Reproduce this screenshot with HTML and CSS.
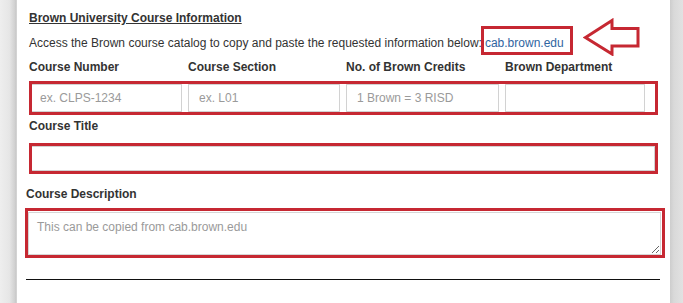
FILE: index.html
```html
<!DOCTYPE html>
<html lang="en">
<head>
<meta charset="utf-8">
<title>Brown University Course Information</title>
<link rel="stylesheet" href="styles.css">
</head>
<body>
<div class="page">
  <div class="gutter-left"></div>
  <main class="panel">
    <section class="info">
      <h3 class="heading">Brown University Course Information</h3>
      <p class="intro">Access the Brown course catalog to copy and paste the requested information below:<a class="link" href="#">cab.brown.edu</a><svg class="arrow" width="58" height="38" viewBox="0 0 58 38"><polygon points="2.5,19.5 29,2.5 29,10.5 55,10.5 55,28 29,28 29,36 " fill="#fff" stroke="#c62832" stroke-width="3" stroke-linejoin="miter"/></svg></p>
      <div class="grid labels">
        <label>Course Number</label>
        <label>Course Section</label>
        <label>No. of Brown Credits</label>
        <label>Brown Department</label>
      </div>
      <div class="grid fields hl">
        <input class="field" type="text" placeholder="ex. CLPS-1234">
        <input class="field" type="text" placeholder="ex. L01">
        <input class="field" type="text" placeholder="1 Brown = 3 RISD">
        <input class="field last" type="text">
      </div>
      <label class="label-block">Course Title</label>
      <div class="title-row hl">
        <input class="field wide" type="text">
      </div>
    </section>
    <section class="desc">
      <label class="label-block">Course Description</label>
      <div class="desc-row hl">
        <textarea class="area" placeholder="This can be copied from cab.brown.edu"></textarea>
      </div>
      <hr class="rule">
    </section>
  </main>
  <div class="gutter-right"></div>
</div>
</body>
</html>
```
FILE: styles.css
```css
* { box-sizing: border-box; }
html, body { margin: 0; padding: 0; }
body {
  font-family: "Liberation Sans", Arial, sans-serif;
  font-size: 12px;
  color: #333;
  background: #fff;
}
.page {
  display: flex;
  height: 303px;
  overflow: hidden;
}
.gutter-left {
  width: 17px;
  flex: none;
  background: linear-gradient(to right, #eeeeee 0, #e6e6e6 55%, #d2d2d2 85%, #c8c8c8 94%, #dedede 100%);
}
.gutter-right {
  width: 13px;
  flex: none;
  background: linear-gradient(to right, #cdcdcd 0, #d9d9d9 30%, #e2e2e2 100%);
}
.panel {
  flex: 1;
  background: #fff;
}
.info {
  padding: 0 12px;
}
.heading {
  margin: 11px 0 0;
  font-size: 12px;
  line-height: 14px;
  font-weight: bold;
  text-decoration: underline;
  color: #333;
}
.intro {
  position: relative;
  margin: 11px 0 0;
  line-height: 14px;
  white-space: nowrap;
}
.link {
  position: relative;
  display: inline-block;
  margin-left: 3px;
  color: #30659f;
  text-decoration: none;
}
.link::after {
  content: "";
  position: absolute;
  left: -4px;
  right: -9px;
  top: -10px;
  bottom: -5px;
  border: 3px solid #c62832;
}
.arrow {
  position: absolute;
  left: 554px;
  top: -18px;
}
.grid {
  display: grid;
  grid-template-columns: 159px 158px 159px 1fr;
}
.labels {
  margin-top: 10px;
  line-height: 14px;
  font-weight: bold;
}
.label-block {
  display: block;
  line-height: 14px;
  font-weight: bold;
}
.hl {
  position: relative;
}
.hl::after {
  content: "";
  position: absolute;
  inset: 0;
  border: 3px solid #c62832;
  pointer-events: none;
}
.fields {
  margin-top: 7px;
  padding: 3px 0;
}
.field {
  display: block;
  height: 28px;
  width: calc(100% - 6px);
  margin: 0;
  padding: 0 10px;
  border: 1px solid #d2d2d2;
  border-radius: 0;
  background: #fff;
  font-family: "Liberation Sans", Arial, sans-serif;
  font-size: 12px;
  color: #555;
}
.field.last {
  width: calc(100% - 13px);
}
.field::placeholder,
.area::placeholder {
  color: #9a9a9a;
}
.info > .label-block {
  margin-top: 4px;
}
.title-row {
  margin-top: 10px;
  padding: 3px 0;
}
.field.wide {
  width: calc(100% - 3px);
  height: 25px;
}
.desc {
  padding: 0 5px 0 8px;
}
.desc .label-block {
  margin-top: 13px;
  padding-left: 1px;
}
.desc-row {
  margin-top: 7px;
  padding: 4px 4px 3px 3px;
}
.area {
  display: block;
  width: 100%;
  height: 43px;
  margin: 0;
  padding: 7px 8px;
  border: 1px solid #d6d6d6;
  border-radius: 0;
  font-family: "Liberation Sans", Arial, sans-serif;
  font-size: 12px;
  color: #555;
  resize: both;
}
.rule {
  margin: 21px 5px 0 1px;
  border: 0;
  border-top: 1px solid #111;
  height: 0;
}
```
